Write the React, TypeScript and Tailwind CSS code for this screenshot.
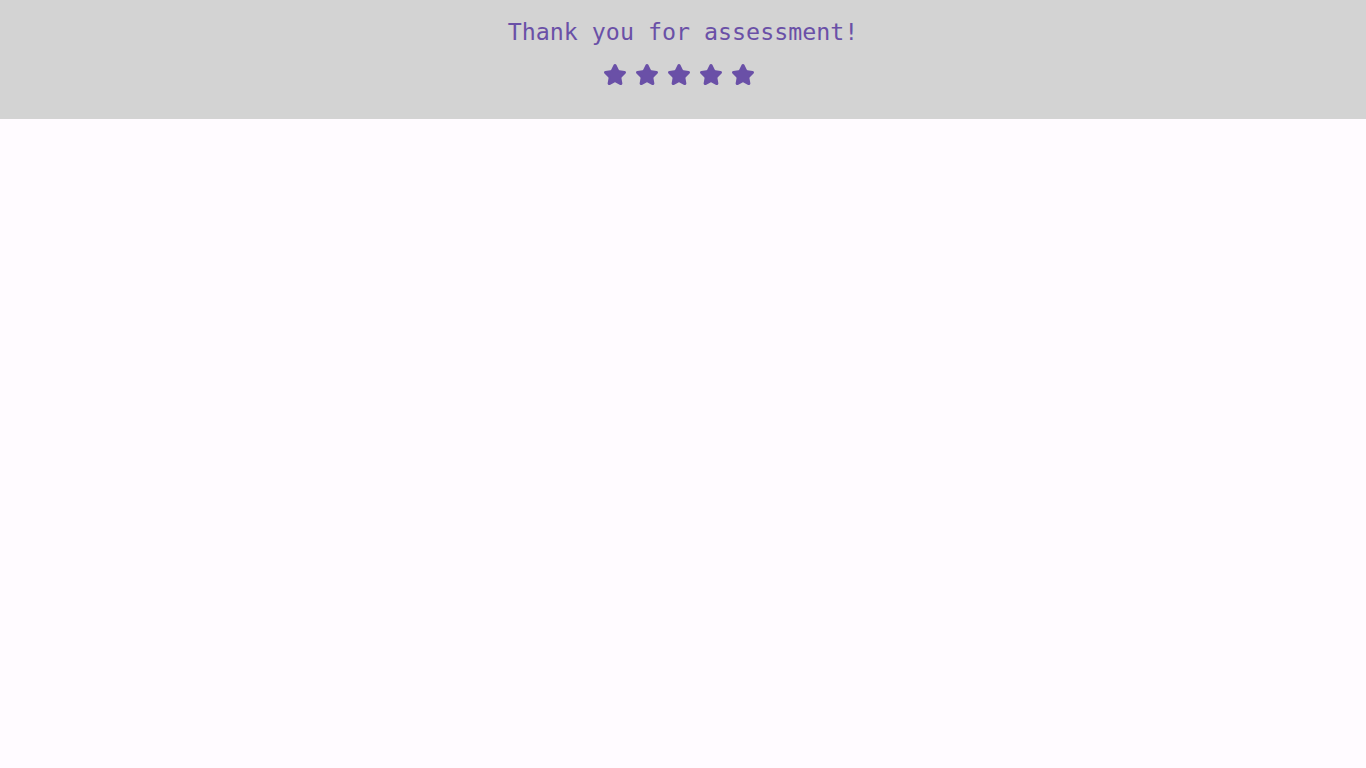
import { Star } from "lucide-react"

function App() {
  return (
    <div className="min-h-screen bg-[#fffbff]">
      <header className="h-[119px] bg-[#d3d3d3] flex flex-col items-center pt-[16px]">
        <h1 className="text-[23.3px] leading-[32px] text-[#6a50a7] font-['DejaVu_Sans_Mono',monospace]">
          Thank you for assessment!
        </h1>
        <div className="flex mt-[15px]">
          {[1, 2, 3, 4, 5].map((i) => (
            <Star key={i} size={24} className="mr-[8px] text-[#6a50a7] fill-[#6a50a7]" strokeWidth={2} />
          ))}
        </div>
      </header>
    </div>
  )
}

export default App
